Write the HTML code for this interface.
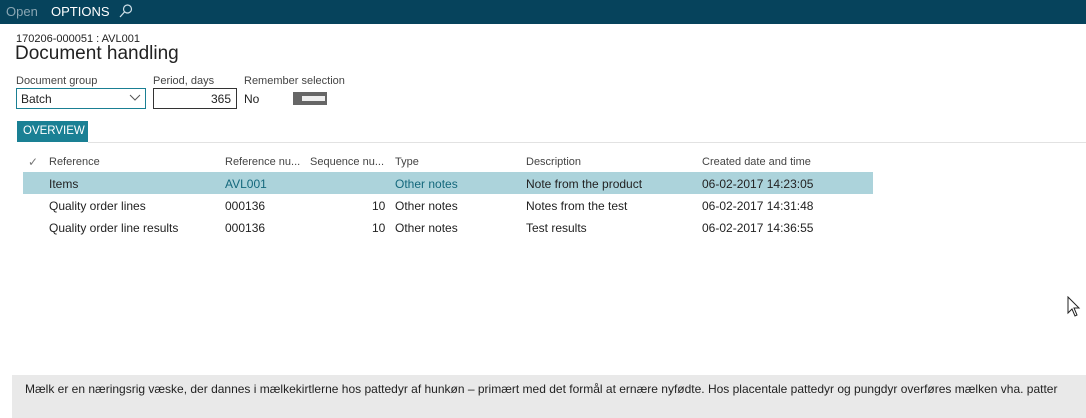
<!DOCTYPE html>
<html><head><style>
body{margin:0;width:1086px;height:418px;background:#fff;font-family:"Liberation Sans",sans-serif;position:relative;overflow:hidden;color:#222}
.a{position:absolute;white-space:nowrap}
.top{position:absolute;left:0;top:0;width:1086px;height:24px;background:#06435c}
.s{font-size:12px}
.h{font-size:11px;color:#444}
</style></head><body>
<div class="top"></div>
<div class="a" style="left:6px;top:4px;font-size:13px;color:#8aa6b3">Open</div>
<div class="a" style="left:51px;top:4px;font-size:13px;color:#fff">OPTIONS</div>
<svg class="a" style="left:118px;top:3px" width="16" height="16"><circle cx="9.5" cy="6" r="4" fill="none" stroke="#cfe0e8" stroke-width="1.2"/><line x1="6.5" y1="9" x2="2" y2="14" stroke="#cfe0e8" stroke-width="1.3"/></svg>
<div class="a" style="left:16px;top:33px;font-size:11px">170206-000051 : AVL001</div>
<div class="a" style="left:15px;top:43px;font-size:19px;color:#222">Document handling</div>
<div class="a h" style="left:16px;top:75px">Document group</div>
<div class="a" style="left:16px;top:88px;width:128px;height:19px;border:1px solid #1a7f93"></div>
<div class="a s" style="left:21px;top:92px">Batch</div>
<svg class="a" style="left:129px;top:94px" width="12" height="8"><path d="M1 1 L6 6 L11 1" fill="none" stroke="#555" stroke-width="1"/></svg>
<div class="a h" style="left:153px;top:75px">Period, days</div>
<div class="a" style="left:153px;top:88px;width:82px;height:19px;border:1px solid #333"></div>
<div class="a s" style="left:153px;top:92px;width:78px;text-align:right">365</div>
<div class="a h" style="left:244px;top:75px">Remember selection</div>
<div class="a s" style="left:244px;top:92px">No</div>
<div class="a" style="left:293px;top:92px;width:34px;height:13px;background:#666"></div>
<div class="a" style="left:301px;top:95px;width:23px;height:5px;background:#eee;border:1px solid #666"></div>
<div class="a" style="left:17px;top:121px;width:71px;height:21px;background:#1a8094"></div>
<div class="a" style="left:23px;top:125px;font-size:11.5px;color:#fff">OVERVIEW</div>
<div class="a" style="left:88px;top:142px;width:998px;height:1px;background:#e2e2e2"></div>
<div class="a" style="left:28px;top:155px;font-size:12px;color:#777">✓</div>
<div class="a h" style="left:49px;top:156px">Reference</div>
<div class="a h" style="left:225px;top:156px">Reference nu...</div>
<div class="a h" style="left:310px;top:156px">Sequence nu...</div>
<div class="a h" style="left:395px;top:156px">Type</div>
<div class="a h" style="left:526px;top:156px">Description</div>
<div class="a h" style="left:702px;top:156px">Created date and time</div>
<div class="a" style="left:23px;top:172px;width:850px;height:22px;background:#acd3db"></div>
<div class="a s" style="left:49px;top:177px">Items</div>
<div class="a s" style="left:225px;top:177px;color:#14687c">AVL001</div>
<div class="a s" style="left:395px;top:177px;color:#14687c">Other notes</div>
<div class="a s" style="left:526px;top:177px">Note from the product</div>
<div class="a s" style="left:702px;top:177px">06-02-2017 14:23:05</div>
<div class="a s" style="left:49px;top:199px">Quality order lines</div>
<div class="a s" style="left:225px;top:199px">000136</div>
<div class="a s" style="left:372px;top:199px">10</div>
<div class="a s" style="left:395px;top:199px">Other notes</div>
<div class="a s" style="left:526px;top:199px">Notes from the test</div>
<div class="a s" style="left:702px;top:199px">06-02-2017 14:31:48</div>
<div class="a s" style="left:49px;top:221px">Quality order line results</div>
<div class="a s" style="left:225px;top:221px">000136</div>
<div class="a s" style="left:372px;top:221px">10</div>
<div class="a s" style="left:395px;top:221px">Other notes</div>
<div class="a s" style="left:526px;top:221px">Test results</div>
<div class="a s" style="left:702px;top:221px">06-02-2017 14:36:55</div>
<svg class="a" style="left:1067px;top:296px" width="14" height="22"><path d="M1 1 L1 17 L5 13 L8 20 L10 19 L7 12 L12 12 Z" fill="#fff" stroke="#222" stroke-width="1"/></svg>
<div class="a" style="left:12px;top:375px;width:1074px;height:43px;background:#e9e9e9"></div>
<div class="a" style="left:25px;top:382px;font-size:12px">Mælk er en næringsrig væske, der dannes i mælkekirtlerne hos pattedyr af hunkøn – primært med det formål at ernære nyfødte. Hos placentale pattedyr og pungdyr overføres mælken vha. patter</div>
</body></html>
